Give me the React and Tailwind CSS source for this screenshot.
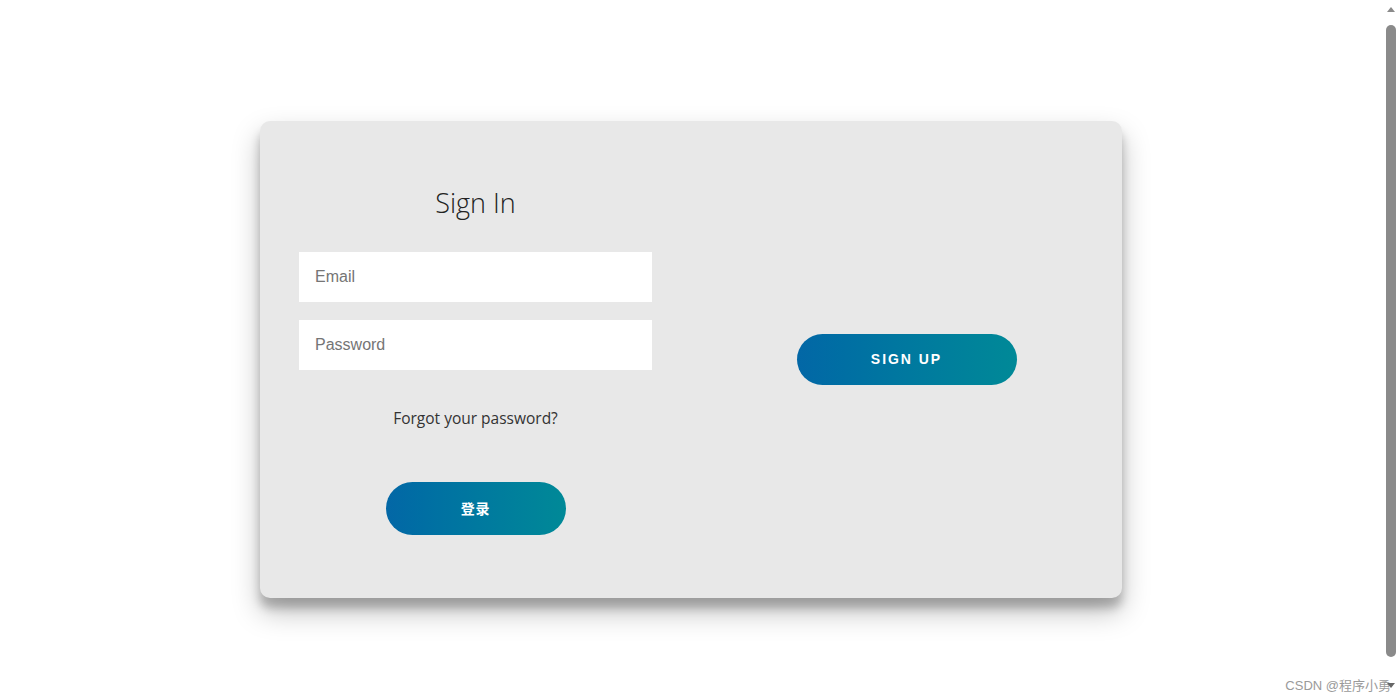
import React from "react";

export default function App() {
  return (
    <div className="relative flex h-[700px] w-[1400px] overflow-hidden bg-white" style={{ fontFamily: '"Open Sans", "Noto Sans", sans-serif' }}>
      <main className="flex flex-1 items-start justify-center pt-[121px]">
        <div className="flex h-[477px] w-[862px] rounded-[10px] bg-[#e8e8e8] shadow-[0_14px_28px_rgba(0,0,0,0.25),0_10px_10px_rgba(0,0,0,0.22)]">
          <section className="flex w-1/2 flex-col items-center justify-center px-[39px]">
            <h1 className="h-[36px] text-[27px] font-light leading-[36px] text-[#222]">Sign In</h1>
            <input
              placeholder="Email"
              className="mt-[31px] h-[50px] w-full bg-white px-4 text-[16px] text-[#333] outline-none placeholder:text-[#757575]"
              style={{ fontFamily: '"Liberation Sans", Arial, sans-serif' }}
            />
            <input
              placeholder="Password"
              className="mt-[18px] h-[50px] w-full bg-white px-4 text-[16px] text-[#333] outline-none placeholder:text-[#757575]"
              style={{ fontFamily: '"Liberation Sans", Arial, sans-serif' }}
            />
            <a className="mt-[37px] text-[15.5px] leading-[22px] text-[#333]">Forgot your password?</a>
            <button
              className="mt-[53px] h-[53px] w-[180px] rounded-full bg-gradient-to-r from-[#0367a6] to-[#008997] text-[14px] font-bold tracking-[0.05em] text-white"
              style={{ fontFamily: '"Noto Sans CJK SC", sans-serif' }}
            >
              登录
            </button>
          </section>
          <section className="flex w-1/2 flex-col items-center justify-center">
            <button
              className="h-[51px] w-[220px] rounded-full bg-gradient-to-r from-[#0367a6] to-[#008997] text-[14px] font-bold tracking-[0.14em] text-white"
              style={{ fontFamily: '"Liberation Sans", Arial, sans-serif' }}
            >
              SIGN UP
            </button>
          </section>
        </div>
      </main>
      <aside className="flex w-[18px] flex-col items-center bg-white">
        <div className="mt-[7px] h-0 w-0 border-x-[4px] border-b-[5px] border-x-transparent border-b-[#8a8a8a]" />
        <div className="mt-[13px] h-[632px] w-[10px] rounded-full bg-[#8a8a8a]" />
      </aside>
      <div
        className="absolute bottom-[5px] right-[5px] flex items-center text-[13px] text-[#9a9a9a]"
        style={{ fontFamily: '"Liberation Sans", "Noto Sans CJK SC", sans-serif' }}
      >
        CSDN @程序小勇
        <span className="ml-[-4px] h-0 w-0 border-x-[4px] border-t-[5px] border-x-transparent border-t-[#666]" />
      </div>
    </div>
  );
}
